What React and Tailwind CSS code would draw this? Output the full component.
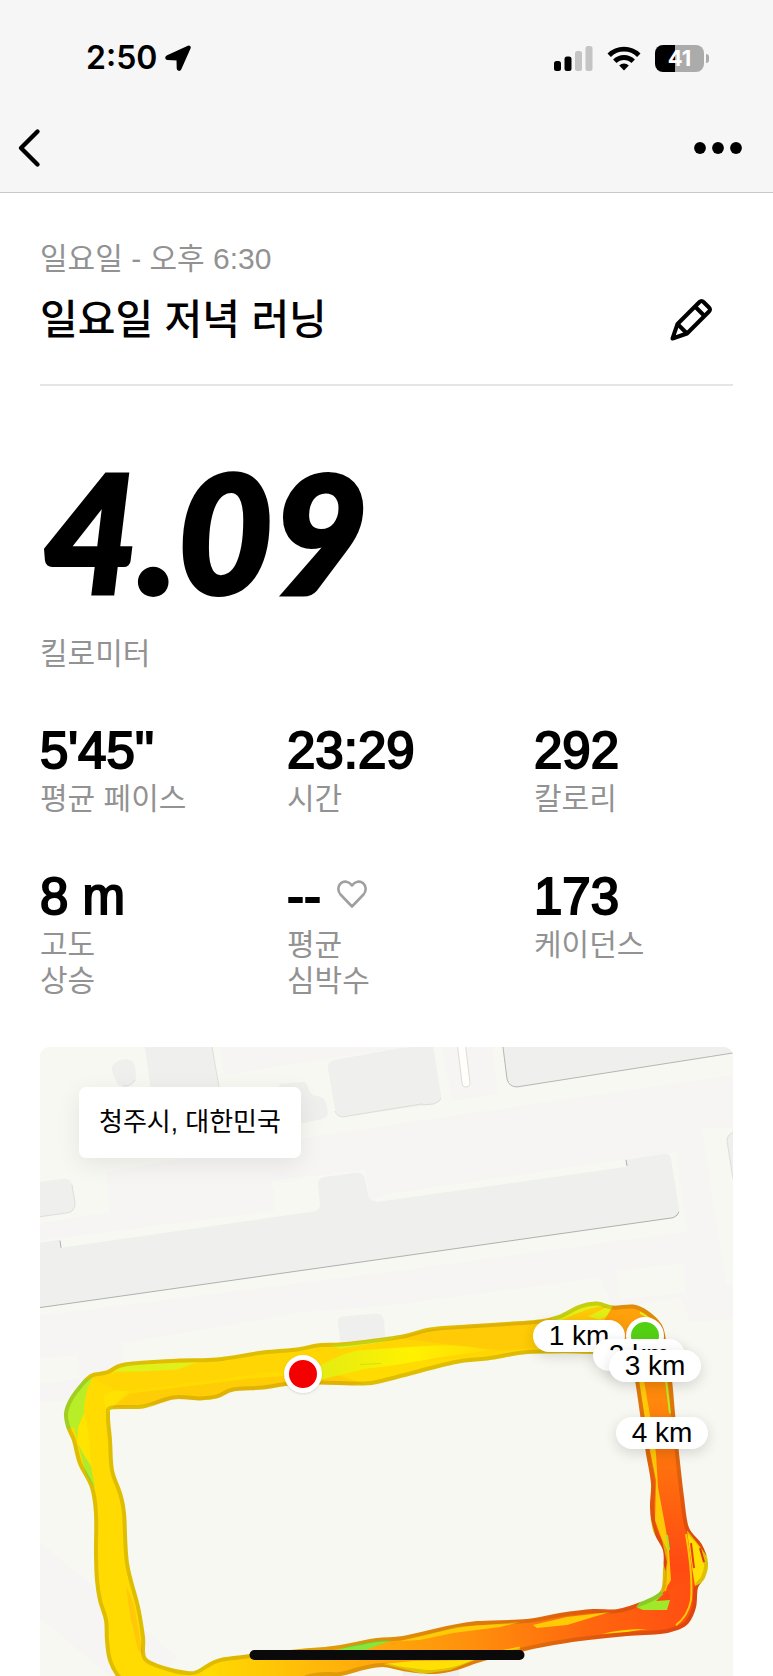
const LATIN_KR = "font-['Liberation_Sans','Noto_Sans_CJK_KR',sans-serif]";

const STATS = [
  { value: "5'45''", label: ["평균 페이스"] },
  { value: "23:29", label: ["시간"] },
  { value: "292", label: ["칼로리"] },
  { value: "8 m", label: ["고도", "상승"] },
  { value: "--", label: ["평균", "심박수"], heart: true },
  { value: "173", label: ["케이던스"] },
];

// The map drawing and its pins share one coordinate space.
const MAP = { x: 40, y: 1046, w: 693, h: 630 };

const OUTER = [
  [66, 1413], [71, 1399], [83, 1383], [92, 1375], [107, 1372], [118, 1366], [133, 1363], [180, 1360],
  [217, 1359], [263, 1352], [297, 1349], [317, 1345], [340, 1344], [360, 1342], [403, 1336], [430, 1329],
  [467, 1326], [513, 1323], [540, 1321], [560, 1316], [580, 1306], [597, 1303], [613, 1307], [633, 1306],
  [647, 1312], [660, 1325], [664, 1340], [670, 1380], [673, 1413], [677, 1453], [682, 1497], [687, 1528],
  [700, 1545], [706, 1563], [703, 1577], [696, 1587], [694, 1607], [687, 1622], [677, 1628], [660, 1632],
  [627, 1634], [580, 1639], [543, 1645], [520, 1650], [480, 1660], [457, 1668], [433, 1672], [403, 1669],
  [383, 1665], [363, 1668], [340, 1674], [310, 1676], [240, 1700], [150, 1705], [120, 1678], [110, 1660],
  [107, 1640], [106, 1620], [100, 1600], [97, 1580], [96, 1553], [96, 1513], [92, 1487], [80, 1463],
  [74, 1440], [68, 1426],
];

const INNER = [
  [112, 1407], [143, 1406], [173, 1397], [200, 1398], [217, 1396], [233, 1389], [263, 1387], [290, 1383],
  [320, 1382], [363, 1383], [383, 1380], [453, 1362], [487, 1358], [523, 1352], [550, 1351], [577, 1351],
  [618, 1353], [632, 1362], [637, 1380], [643, 1420], [648, 1453], [653, 1483], [652, 1507], [655, 1530],
  [665, 1550], [665, 1570], [662, 1592], [643, 1603], [617, 1611], [593, 1611], [560, 1615], [527, 1621],
  [477, 1623], [447, 1628], [403, 1638], [377, 1640], [333, 1648], [300, 1651], [243, 1657], [217, 1661],
  [197, 1672], [187, 1673], [167, 1669], [145, 1659], [143, 1637], [138, 1607], [127, 1563], [124, 1513],
  [120, 1493], [112, 1470], [110, 1440], [108, 1415],
];

function smooth(points) {
  const n = points.length;
  const at = (i) => points[(i + n) % n];
  let d = `M${at(0)[0]} ${at(0)[1]}`;
  for (let i = 0; i < n; i++) {
    const [a, b, c, e] = [at(i - 1), at(i), at(i + 1), at(i + 2)];
    d += `C${b[0] + (c[0] - a[0]) / 6} ${b[1] + (c[1] - a[1]) / 6} ${c[0] - (e[0] - b[0]) / 6} ${c[1] - (e[1] - b[1]) / 6} ${c[0]} ${c[1]}`;
  }
  return d + "Z";
}

const ROUTE = smooth(OUTER) + smooth(INNER);

function place(x, y) {
  return { left: `${((x - MAP.x) / MAP.w) * 100}%`, top: `${((y - MAP.y) / MAP.h) * 100}%` };
}

function StatusBar() {
  return (
    <div className="flex h-[116px] items-center justify-between pr-16 pl-[86px]">
      <div className="flex items-center gap-2">
        <span className="font-['Inter',sans-serif] text-[32px] leading-9 font-semibold">2:50</span>
        <svg viewBox="0 0 26 26" className="size-[26px]" aria-hidden="true">
          <path d="M23.300 1.600 2 11.500c-1.200.700-.9 2.500.5 2.600l10 .4.200 9c.1 1.500 1.900 1.900 2.600.5L24.700 2.900C25 1.900 24.200 1.200 23.300 1.600Z" stroke="#000" strokeWidth="2" strokeLinejoin="round" />
        </svg>
      </div>
      <div className="flex items-center gap-[14px]">
        <svg viewBox="0 0 39 25" className="h-[25px] w-[39px]" aria-hidden="true">
          <rect x="0" y="15" width="7" height="10" rx="2.500" />
          <rect x="10.500" y="10.500" width="7" height="14.500" rx="2.500" />
          <rect x="21" y="5" width="7" height="20" rx="2.500" fill="#c4c4c4" />
          <rect x="31.500" y="0" width="7" height="25" rx="2.500" fill="#c4c4c4" />
        </svg>
        <svg viewBox="0 0 34 25" className="h-[25px] w-[34px]" fill="none" stroke="#000" aria-hidden="true">
          <path d="M2.200 9.200a21 21 0 0 1 29.600 0" strokeWidth="4.800" />
          <path d="M7.800 15.300a13 13 0 0 1 18.400 0" strokeWidth="4.800" />
          <path d="M17 24.500 12.200 19.500a6.800 6.800 0 0 1 9.600 0Z" fill="#000" stroke="none" />
        </svg>
        <div className="flex items-center gap-[2px]">
          <div className="flex h-[27px] w-[49px] items-center justify-center rounded-[8px] bg-linear-to-r from-black from-40% to-[#ababab] to-40% font-['Inter',sans-serif] text-[22px] leading-6 font-bold text-white">
            41
          </div>
          <div className="h-[9px] w-[3px] rounded-r-full bg-[#ababab]" />
        </div>
      </div>
    </div>
  );
}

function MapDrawing() {
  return (
    <svg viewBox="40 1046 693 630" preserveAspectRatio="none" className="block size-full" aria-hidden="true">
      <defs>
        <mask id="route" maskUnits="userSpaceOnUse" x="40" y="1046" width="693" height="700">
          <path d={ROUTE} fill="#fff" fillRule="evenodd" stroke="#fff" strokeWidth="4" />
        </mask>
        <linearGradient id="right" gradientUnits="userSpaceOnUse" x1="0" y1="1310" x2="0" y2="1600">
          <stop offset="0" stopColor="#ffa20a" />
          <stop offset=".3" stopColor="#ff880c" />
          <stop offset=".6" stopColor="#ff6a0e" />
          <stop offset=".88" stopColor="#ff4a12" />
          <stop offset="1" stopColor="#ff5310" />
        </linearGradient>
        <linearGradient id="bottom" gradientUnits="userSpaceOnUse" x1="200" y1="0" x2="690" y2="0">
          <stop offset="0" stopColor="#ffdc00" />
          <stop offset=".25" stopColor="#ffb60a" />
          <stop offset=".55" stopColor="#ff900c" />
          <stop offset=".8" stopColor="#ff660e" />
          <stop offset="1" stopColor="#ff4f12" />
        </linearGradient>
        <linearGradient id="glow" gradientUnits="userSpaceOnUse" x1="320" y1="0" x2="500" y2="0">
          <stop offset="0" stopColor="#e4ec12" />
          <stop offset=".5" stopColor="#fff200" />
          <stop offset="1" stopColor="#ffd704" />
        </linearGradient>
      </defs>

      <rect x="40" y="1046" width="693" height="630" fill="#f7f8f2" />

      <g fill="#f6f5f4">
        <path d="M220 1046 224 1074 405 1046Z" />
        <path d="M441 1046 452 1100 498 1093 492 1046Z" />
        <path d="M106 1171 190 1157 300 1138 390 1124 733 1074V1127L702 1128 726 1282 733 1286V1318L690 1322 681 1297 613 1307 600 1277 390 1305 69 1329 67 1320 40 1323V1315L390 1271 687 1231 676 1151 390 1193 370 1200 365 1169 272 1180 274 1210 110 1212 40 1240V1222L110 1212Z" />
        <path d="M40 1222 110 1212 274 1188 274 1210 40 1240Z" />
        <path d="M40 1323 67 1320 69 1329 240 1304 300 1312 122 1343 125 1392 80 1400 40 1402Z" />
        <path d="M40 1542 178 1658 160 1676H110L40 1618Z" />
      </g>
      <g fill="#f7f8f2">
        <path d="M390 1305 600 1277 603 1300 560 1320 390 1330Z" />
        <path d="M617 1270 683 1263 686 1292 620 1299Z" />
        <path d="M40 1357 78 1355 80 1378 40 1383Z" />
      </g>

      <g fill="#efefee" stroke="#cfcfcd" strokeWidth=".6">
        <path stroke="none" d="M145 1046H212L219 1090H151Z" />
        <path fill="none" d="M212 1046 219 1086" />
        <path d="M112 1070c-1-6 3-9 9-11 8-2 13 1 14 7l1 7c1 6-3 9-9 12-4 1-9 0-10-3Z" stroke="none" />
        <path fill="none" d="M135 1079c-2 4-7 7-12 6" />
        <path stroke="none" d="M280 1083 303 1081Q307 1081 309 1089 311 1094 316 1095 324 1095 326 1102L328 1111Q328 1116 322 1118L298 1123 270 1110Z" />
        <path stroke="none" d="M328 1067Q327 1061 334 1059L400 1047 433 1044 441 1094Q442 1101 434 1103L342 1116Q337 1116 335 1108Z" />
        <path fill="none" d="M335 1110Q337 1116 343 1116L422 1103 424 1104 434 1103Q440 1101 441 1097" />
        <path stroke="none" d="M503 1046 507 1078Q509 1086 517 1086L733 1052V1046Z" />
        <path fill="none" stroke="#b5b5b3" strokeWidth="1" d="M503 1046 507 1078Q509 1086 517 1086L733 1052" />
        <path stroke="none" d="M40 1181 64 1178Q71 1178 72 1184L75 1202Q75 1211 68 1212L40 1216Z" />
        <path fill="none" d="M72 1184 75 1202Q75 1211 68 1212L40 1216" />
        <path d="M735 1131Q727 1133 727 1140L733 1178 740 1180Z" />
        <path stroke="none" d="M40 1242 60 1239 61 1247 312 1211Q320 1210 320 1203L318 1184Q318 1177 326 1176L356 1172Q364 1172 365 1178L368 1194Q370 1201 378 1201L627 1166 626 1159 664 1153Q670 1153 671 1158L679 1208Q680 1216 673 1217L40 1307Z" />
        <path fill="none" stroke="#b0b0ae" strokeWidth="1" d="M40 1307 673 1217Q678 1215 679 1211M60 1240 61 1247M626 1159 627 1165" />
        <path stroke="none" d="M338 1323Q337 1317 343 1316L376 1313Q383 1313 384 1320L386 1345 341 1345Z" />
        <path stroke="none" d="M403 1670H459L460 1680H402Z" />
      </g>
      <path d="M461 1040 466 1082" stroke="#dedcd6" strokeWidth="9" strokeLinecap="round" />
      <path d="M461 1040 466 1082" stroke="#fffefa" strokeWidth="7" strokeLinecap="round" />

      <g mask="url(#route)">
        <rect x="40" y="1290" width="693" height="420" fill="#ffdb02" />
        <path d="M88 1376 300 1350 620 1300 660 1340 550 1352 300 1368 120 1392Z" fill="#ffd604" />
        <path d="M112 1407 130 1393 250 1378 330 1372 363 1383 300 1390 173 1402Z" fill="#ffcd06" />
        <path d="M103 1398Q106 1388 128 1391L112 1407 108 1415Z" fill="#ffe202" />
        <path d="M400 1338 430 1329 560 1318 580 1345 500 1350Z" fill="#ffcb06" />
        <path d="M320 1365Q340 1354 357 1350L433 1345Q470 1344 487 1350L433 1358Q390 1366 367 1368L300 1384Z" fill="url(#glow)" />
        <path d="M360 1364 381 1363" stroke="#d8dc12" strokeWidth="1" />
        <path d="M112 1371 127 1364 197 1362 177 1369 140 1371Z" fill="#dff01a" />
        <path d="M330 1345 403 1335 380 1342 340 1348Z" fill="#dff01a" />
        <path d="M93 1377Q84 1390 84 1413 77 1427 77 1443L60 1427 62 1403 80 1380Z" fill="#b8ee28" />
        <path d="M84 1413 78 1427 78 1445 92 1467 88 1430Z" fill="#ffe400" />
        <path d="M60 1430 74 1427 78 1443 82 1458 72 1450Z" fill="#ffdb02" />
        <path d="M78 1443 84 1455 91 1466 95 1488 86 1474Z" fill="#b0ea2c" />
        <path d="M126 1585 134 1605 143 1655 138 1650 130 1615Z" fill="#ffc808" />

        <path d="M560 1300H605L617 1310 590 1322 550 1322Z" fill="#e2ee14" />
        <path d="M550 1326Q586 1306 606 1306L612 1316 600 1334Z" fill="#ffc808" />
        <path d="M588 1316 608 1306 616 1311 600 1319Z" fill="#e2ee14" />
        <path d="M603 1322 616 1300 670 1300V1400H630L620 1352Z" fill="url(#right)" />
        <path d="M630 1370H720V1650H655L668 1580 640 1480Z" fill="url(#right)" />
        <path d="M200 1664 300 1640 500 1610 655 1595 690 1580 720 1600V1660L480 1690H240Z" fill="url(#bottom)" />
        <path d="M640 1312Q652 1318 656 1328" stroke="#dff01a" strokeWidth="2" fill="none" />

        <path d="M639 1380H644L650 1415 656 1453 658 1487 666 1530 669 1550 671 1580 661 1596 667 1562 662 1540 655 1520 656 1480 650 1450Z" fill="#ffc908" />
        <path d="M666 1380 670 1413" stroke="#b8ea28" strokeWidth="2" />
        <path d="M667 1535 669 1550" stroke="#a0e82a" strokeWidth="2" />
        <path d="M687 1530 699 1545 712 1563 706 1580 695 1586 692 1567Z" fill="#ffdf04" />
        <path d="M691 1543 694 1568M700 1548 704 1562" stroke="#ec3a0e" strokeWidth="2" />
        <path d="M686 1534Q693 1575 691 1600 688 1616 676 1625" stroke="#ffc908" strokeWidth="2" fill="none" />
        <path d="M668 1590Q660 1600 652 1604L670 1600Z" fill="#ff4a12" />
        <path d="M660 1590 643 1598 636 1607 643 1610 667 1610 670 1600 656 1601 663 1594Z" fill="#a0e82a" />
        <path d="M533 1625 567 1617 610 1612 567 1625 537 1628Z" fill="#ffcb06" />
        <path d="M602 1634Q620 1629 647 1629L627 1632Z" fill="#ffd604" />
        <path d="M400 1641 457 1627 520 1622 500 1627 453 1633 420 1640Z" fill="#ffcb06" />
        <path d="M335 1651Q360 1641 392 1640L363 1651Z" fill="#8ae43a" />
        <path d="M383 1664 413 1661 475 1660 450 1670 423 1674Z" fill="#ffe004" />
        <path d="M500 1652 520 1648" stroke="#ffc908" strokeWidth="3" />
      </g>
      <path d={ROUTE} fill="none" stroke="#1a1000" strokeOpacity=".14" strokeWidth="4" />
    </svg>
  );
}

function Pin({ x, y, children }) {
  return (
    <span
      style={place(x, y)}
      className="absolute flex h-8 w-[92px] items-center justify-center rounded-full bg-white text-[28px] leading-8 whitespace-nowrap shadow-[0_4px_14px_rgba(0,0,0,0.14)]"
    >
      {children}
    </span>
  );
}

function RouteMap() {
  return (
    <section aria-label="러닝 경로" className="relative mt-12 min-h-[480px] flex-1 overflow-hidden rounded-t-[9px]">
      <div className="absolute inset-0">
        <MapDrawing />
      </div>
      <span style={place(284, 1354)} className="absolute size-[38px] rounded-full border-5 border-white bg-[#f50000] shadow-sm" />
      <Pin x={533} y={1319}>1 km</Pin>
      <span style={place(626, 1316)} className="absolute size-[38px] rounded-full border-5 border-white bg-[#54d013] shadow-sm" />
      <Pin x={593} y={1338}>2 km</Pin>
      <Pin x={609} y={1349}>3 km</Pin>
      <Pin x={616} y={1417}>4 km</Pin>
      <div className="absolute top-10 left-[39px] rounded-[7px] bg-white px-5 py-[18px] text-[26px] leading-[35px] shadow-[0_6px_24px_rgba(0,0,0,0.08)]">
        청주시, 대한민국
      </div>
    </section>
  );
}

export default function App() {
  return (
    <div className={`flex min-h-screen flex-col bg-white text-black ${LATIN_KR}`}>
      <header className="h-[193px] border-b border-[#c8c8c8] bg-[#f6f6f6]">
        <StatusBar />
        <nav className="flex h-16 items-center justify-between pr-[31px] pl-4">
          <button type="button" aria-label="뒤로">
            <svg viewBox="0 0 25 40" className="h-10 w-[25px]" fill="none" stroke="#000" strokeWidth="4.400" strokeLinecap="round" strokeLinejoin="round">
              <path d="M21.500 3.500 5 20 21.500 36.500" />
            </svg>
          </button>
          <button type="button" aria-label="더보기">
            <svg viewBox="0 0 48 12" className="h-3 w-12">
              <circle cx="6" cy="6" r="5.900" />
              <circle cx="24" cy="6" r="5.900" />
              <circle cx="42" cy="6" r="5.900" />
            </svg>
          </button>
        </nav>
      </header>

      <main className="flex flex-1 flex-col px-10">
        <div className="flex items-end justify-between border-b-2 border-[#e5e5e5] pt-12 pr-5 pb-9">
          <div>
            <p className="text-[30px] leading-9 text-[#929292]">일요일 - 오후 6:30</p>
            <h1 className="mt-[15px] text-[41px] leading-14 font-medium">일요일 저녁 러닝</h1>
          </div>
          <button type="button" aria-label="이름 수정" className="pb-[6px]">
            <svg viewBox="0 0 44 44" className="size-11" fill="none" stroke="#000" strokeWidth="4" strokeLinejoin="round">
              <path d="M3.500 40.500 8.500 26 30.500 4Q32.500 2 34.500 4L40 9.500Q42 11.500 40 13.500L18 35.500Z" />
              <path d="M8.500 26 18 35.500M26 8.500 35.500 18" />
            </svg>
          </button>
        </div>

        <p className="mt-[65px] pl-[3px] font-['Lato',sans-serif] text-[164px] leading-[160px] font-black italic [-webkit-text-stroke:4px]">4.09</p>
        <p className="mt-[25px] text-[30px] leading-9 text-[#929292]">킬로미터</p>

        <dl className="mt-[50px] grid grid-cols-3 gap-x-12 gap-y-[22px]">
          {STATS.map((s) => (
            <div key={s.label.join(" ")} className="flex min-h-[124px] flex-col-reverse justify-end">
              <dt className="text-[30px] leading-9 text-[#929292]">
                {s.label.map((line) => (
                  <span key={line} className="block">{line}</span>
                ))}
              </dt>
              <dd className="flex items-center gap-4 pb-px text-[51px] leading-[58px] [-webkit-text-stroke:2px]">
                {s.value}
                {s.heart && (
                  <svg viewBox="0 0 30 28" className="mb-1.5 h-7 w-[30px]" fill="none" stroke="#a0a0a0" strokeWidth="2.600" strokeLinejoin="round" aria-hidden="true">
                    <path d="M15 26.500 3.500 14.500C.500 11 .700 6 3.800 3.300 7 .600 12 1.200 15 5.500 18 1.200 23 .600 26.200 3.300 29.300 6 29.500 11 26.500 14.500Z" />
                  </svg>
                )}
              </dd>
            </div>
          ))}
        </dl>

        <RouteMap />
      </main>

      <div className="fixed bottom-4 left-1/2 h-[10px] w-[275px] -translate-x-1/2 rounded-full bg-[#0a0a0a]" />
    </div>
  );
}
